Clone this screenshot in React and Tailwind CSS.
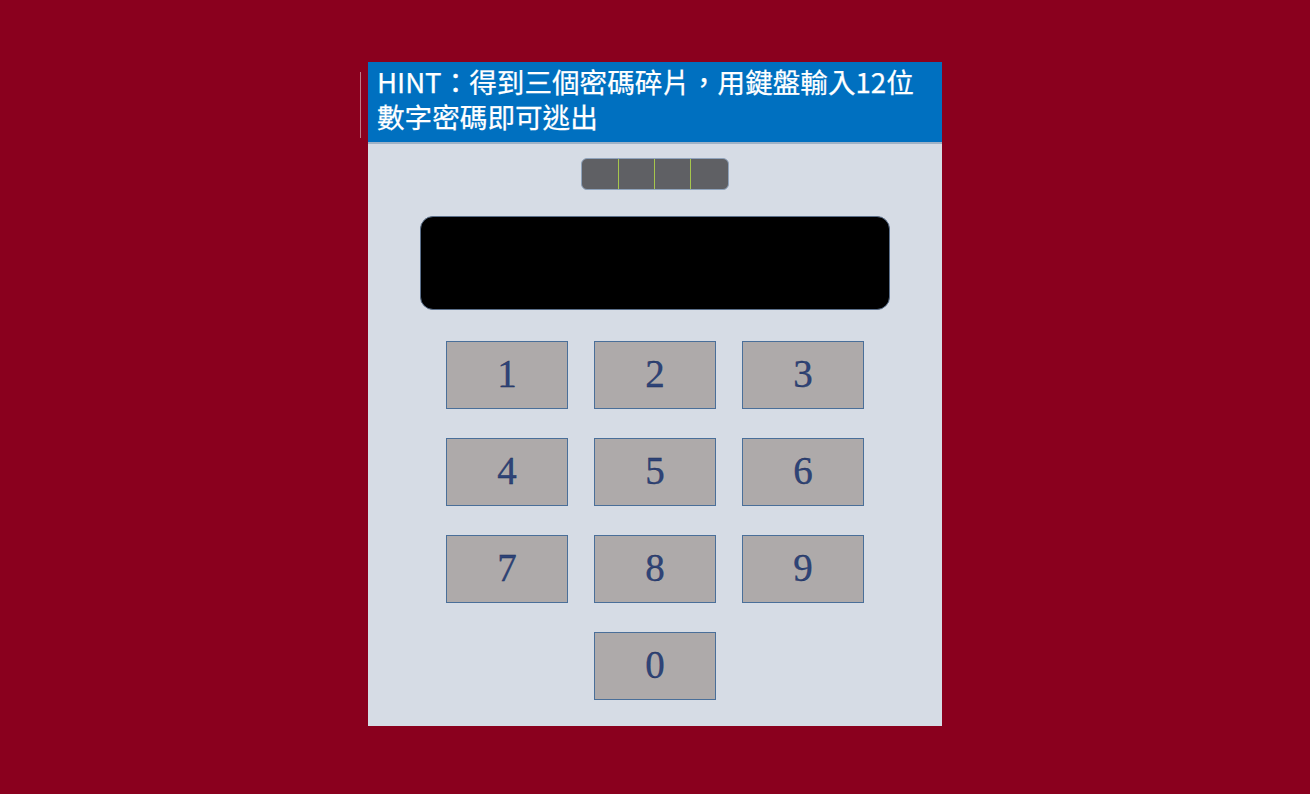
const keys = ['1', '2', '3', '4', '5', '6', '7', '8', '9'];

function Key({ label }) {
  return (
    <div className="w-[122px] h-[68px] bg-[#aeaaaa] border border-[#4a6f99] flex items-center justify-center">
      <span
        className="text-[39px] leading-none text-[#2e4478] pb-[3px]"
        style={{ fontFamily: '"Liberation Serif", "DejaVu Serif", serif', WebkitTextStroke: '0.3px #1a2a55' }}
      >
        {label}
      </span>
    </div>
  );
}

export default function App() {
  return (
    <div className="w-full h-[794px] bg-[#8a001e] flex justify-center pt-[62px] relative">
      {/* stray edge line */}
      <div className="absolute left-[360px] top-[72px] w-px h-[66px] bg-[#c07a88]" />

      <div className="w-[574px] h-[664px] flex flex-col" style={{ fontFamily: '"Noto Sans CJK TC", "Noto Sans", sans-serif' }}>
        {/* Header */}
        <div
          className="h-[80px] bg-[#0070c0] px-[9px] pt-[2px] text-white text-[27.6px] leading-[35px] font-normal"
          style={{ WebkitTextStroke: '0.25px #ffffff' }}
        >
          HINT：得到三個密碼碎片，用鍵盤輸入12位
          <br />
          數字密碼即可逃出
        </div>
        <div className="h-[2px] bg-[#9fb2c6]" />

        {/* Body */}
        <div className="flex-1 bg-[#d6dce5] flex flex-col items-center pt-[14px]">
          <div className="w-[148px] h-[32px] rounded-[6px] bg-[#5f6064] flex overflow-hidden border border-[#8fa3bb]">
            <div className="w-[36px]" />
            <div className="w-px bg-[#a6c64c]" />
            <div className="w-[35px]" />
            <div className="w-px bg-[#a6c64c]" />
            <div className="w-[35px]" />
            <div className="w-px bg-[#a6c64c]" />
            <div className="flex-1" />
          </div>

          <div className="mt-[26px] w-[470px] h-[94px] rounded-[13px] bg-black border border-[#5b6f8a]" />

          <div className="mt-[31px] grid grid-cols-[122px_122px_122px] gap-x-[26px] gap-y-[29px]">
            {keys.map((k) => (
              <Key key={k} label={k} />
            ))}
            <div />
            <Key label="0" />
          </div>
        </div>
      </div>
    </div>
  );
}
